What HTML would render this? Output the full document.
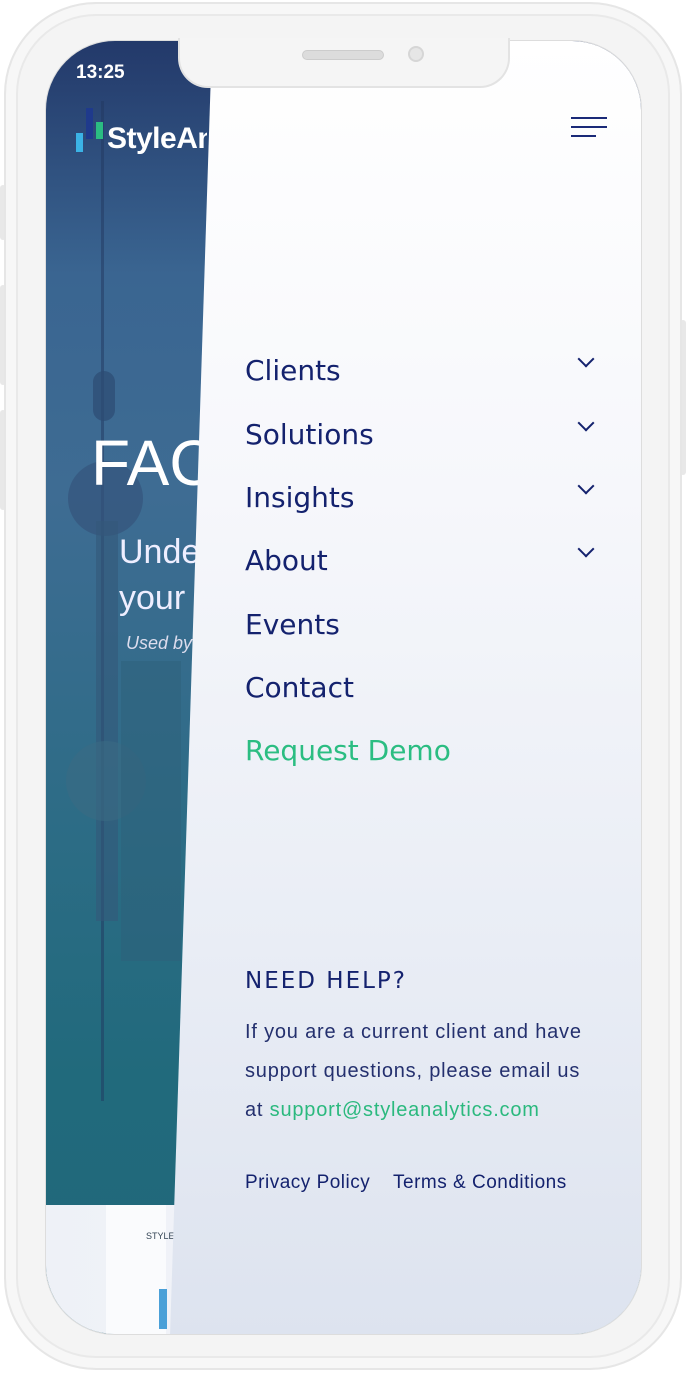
<!DOCTYPE html>
<html><head><meta charset="utf-8"><style>
*{margin:0;padding:0;box-sizing:border-box}
body{width:686px;height:1373px;background:#fff;position:relative;overflow:hidden;font-family:"Liberation Sans",sans-serif}
.phone{position:absolute;left:4px;top:2px;width:678px;height:1368px;border-radius:92px;background:#f4f4f4;border:2px solid #e6e6e6;box-shadow:inset 0 0 0 10px #f7f7f7,inset 0 0 0 12px #e9e9e9}
.btn{position:absolute;background:#e8e8e8;width:6px;border-radius:3px}
.screen{position:absolute;left:45px;top:40px;width:597px;height:1295px;border-radius:70px;overflow:hidden;background:linear-gradient(180deg,#23396a 0%,#3a6591 18%,#3e6c93 35%,#2d6c86 60%,#216a7c 80%,#21677a 100%);border:1px solid #ddd}
.bottomstrip{position:absolute;left:0;top:1164px;width:597px;height:140px;background:linear-gradient(90deg,#eef1f7,#f6f7fa)}
.menu{position:absolute;left:0;top:0;width:597px;height:1295px;background:linear-gradient(180deg,#ffffff 0%,#f6f7fb 35%,#e9edf5 70%,#dde3ef 100%);clip-path:polygon(166px 0,597px 0,597px 1295px,124px 1295px)}
.notch{position:absolute;left:178px;top:38px;width:332px;height:50px;background:#f5f5f5;border:2px solid #e3e3e3;border-top:none;border-radius:0 0 30px 30px}
.spk{position:absolute;left:302px;top:50px;width:82px;height:10px;border-radius:5px;background:#dcdcdc;border:1px solid #ccc}
.cam{position:absolute;left:408px;top:46px;width:16px;height:16px;border-radius:50%;background:#e6e6e6;border:2px solid #d6d6d6}
.time{position:absolute;left:76px;top:62px;color:#fff;font-size:19px;font-weight:bold}
.logo{position:absolute;left:107px;top:122px;color:#fff;font-size:30px;font-weight:bold;letter-spacing:-0.5px}
.item{position:absolute;left:245px;color:#14226e;font-size:28px;font-family:"DejaVu Sans","Liberation Sans",sans-serif;letter-spacing:0}
.chev{position:absolute;left:580px;width:12px;height:12px;border-right:2px solid #14226e;border-bottom:2px solid #14226e;transform:rotate(45deg)}
.help{position:absolute;left:245px;top:968px;color:#14226e;font-size:23px;letter-spacing:2px;font-family:"DejaVu Sans",sans-serif}
.p{position:absolute;left:245px;top:1013px;color:#24306e;font-size:20px;line-height:39px;white-space:nowrap;letter-spacing:0.8px}
.g{color:#2bb97e}
.links{position:absolute;left:245px;top:1172px;color:#14226e;font-size:19px;letter-spacing:0.5px}
</style></head><body>
<div class="btn" style="left:0;top:185px;height:55px"></div>
<div class="btn" style="left:0;top:285px;height:100px"></div>
<div class="btn" style="left:0;top:410px;height:100px"></div>
<div class="btn" style="left:680px;top:320px;height:155px"></div>
<div class="phone"></div>
<div class="screen">
  <div style="position:absolute;left:55px;top:60px;width:3px;height:1000px;background:#22385f;opacity:.5"></div>
  <div style="position:absolute;left:47px;top:330px;width:22px;height:50px;border-radius:11px;background:#2c4c74;opacity:.7"></div>
  <div style="position:absolute;left:22px;top:420px;width:75px;height:75px;border-radius:50%;background:#34547c;opacity:.7"></div>
  <div style="position:absolute;left:50px;top:480px;width:22px;height:400px;background:#34587a;opacity:.6"></div>
  <div style="position:absolute;left:20px;top:700px;width:80px;height:80px;border-radius:50%;background:#3b6a84;opacity:.6"></div>
  <div style="position:absolute;left:75px;top:620px;width:60px;height:300px;background:#2d5f7a;opacity:.5"></div>
  <div style="position:absolute;left:45px;top:385px;color:#fff;font-size:64px;font-weight:300">FAC</div>
  <div style="position:absolute;left:73px;top:488px;color:#eef;font-size:34px;line-height:46px">Unde<br>your</div>
  <div style="position:absolute;left:80px;top:592px;color:#dde;font-size:18px;font-style:italic">Used by</div>
  <div class="bottomstrip"></div>
  <div style="position:absolute;left:60px;top:1164px;width:60px;height:140px;background:#fafbfd"></div>
  <div style="position:absolute;left:100px;top:1190px;font-size:9px;color:#345">STYLE</div>
  <div style="position:absolute;left:113px;top:1248px;width:8px;height:40px;background:#4aa0d8"></div>
  <div class="menu"></div>
</div>
<div class="notch"></div><div class="spk"></div><div class="cam"></div>
<div class="time">13:25</div>
<div style="position:absolute;left:76px;top:133px;width:7px;height:19px;background:#3bb3e6"></div>
<div style="position:absolute;left:86px;top:108px;width:7px;height:31px;background:#1f3a8c"></div>
<div style="position:absolute;left:96px;top:122px;width:7px;height:17px;background:#2bbd82"></div>
<div class="logo" style="clip-path:inset(0 calc(100% - 100px) 0 0)">StyleAnalytics</div>
<div style="position:absolute;left:571px;top:117px;width:36px;height:2px;background:#1a2a78"></div>
<div style="position:absolute;left:571px;top:126px;width:36px;height:2px;background:#1a2a78"></div>
<div style="position:absolute;left:571px;top:135px;width:25px;height:2px;background:#1a2a78"></div>
<div class="item" style="top:354px">Clients</div>
<div class="item" style="top:418px">Solutions</div>
<div class="item" style="top:481px">Insights</div>
<div class="item" style="top:544px">About</div>
<div class="item" style="top:608px">Events</div>
<div class="item" style="top:671px">Contact</div>
<div class="item" style="top:734px;color:#2bbd82">Request Demo</div>
<div class="chev" style="top:353px"></div>
<div class="chev" style="top:417px"></div>
<div class="chev" style="top:480px"></div>
<div class="chev" style="top:543px"></div>
<div class="help">NEED HELP?</div>
<div class="p">If you are a current client and have<br>support questions, please email us<br>at <span class="g">support@styleanalytics.com</span></div>
<div class="links">Privacy Policy&nbsp;&nbsp;&nbsp; Terms &amp; Conditions</div>
</body></html>
